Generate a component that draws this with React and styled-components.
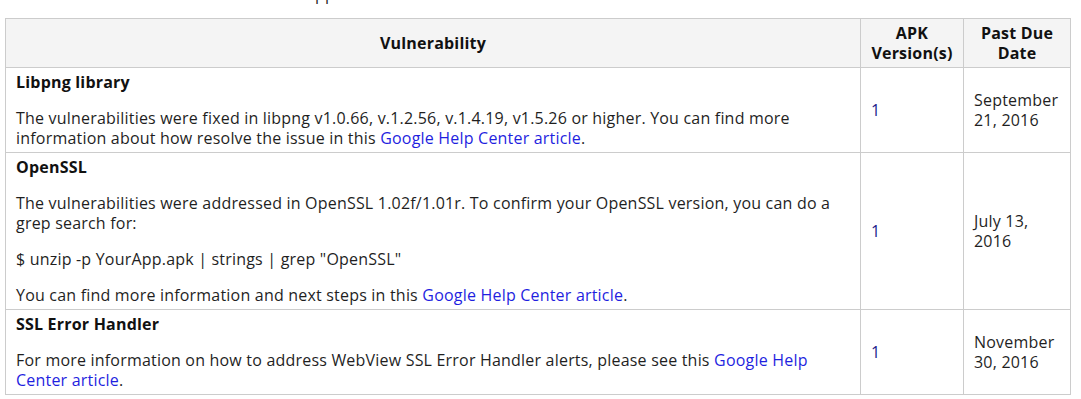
import React from "react";
import styled, { createGlobalStyle } from "styled-components";

const Global = createGlobalStyle`
  html, body { margin: 0; padding: 0; background: #fff; }
  body {
    font-family: "Open Sans", "Noto Sans", "Liberation Sans", sans-serif;
    font-size: 16px;
    line-height: 20px;
    letter-spacing: 0.2px;
    color: #1f1f1f;
  }
`;

const Page = styled.div`
  padding: 0 12px 0 5px;
`;

const Intro = styled.div`
  height: 18px;
  overflow: hidden;
`;

const IntroText = styled.p`
  margin: -16px 0 0 0;
  padding-left: 233px;
  line-height: 20px;
`;

const Table = styled.table`
  width: 1065px;
  border-collapse: collapse;
  table-layout: fixed;
`;

const Th = styled.th`
  background: #f4f4f4;
  border: 1px solid #cccccc;
  padding: 4px 10px;
  font-weight: 700;
  text-align: center;
  vertical-align: middle;
  color: #111;
`;

const Td = styled.td`
  border: 1px solid #cccccc;
  padding: 4px 10px;
  vertical-align: ${(p) => (p.$top ? "top" : "middle")};
  text-align: left;
`;

const Title = styled.div`
  font-weight: 700;
  color: #111;
`;

const Para = styled.p`
  margin: 16px 0 0 0;
`;

const Link = styled.a`
  color: #1f1fe0;
  text-decoration: none;
`;

const Num = styled.span`
  color: #1c1c8c;
`;

const rows = [
  {
    title: "Libpng library",
    body: (
      <Para>
        The vulnerabilities were fixed in libpng v1.0.66, v.1.2.56, v.1.4.19,
        v1.5.26 or higher. You can find more information about how resolve the
        issue in this <Link href="#">Google Help Center article</Link>.
      </Para>
    ),
    apk: "1",
    date: "September 21, 2016",
  },
  {
    title: "OpenSSL",
    body: (
      <>
        <Para>
          The vulnerabilities were addressed in OpenSSL 1.02f/1.01r. To confirm
          your OpenSSL version, you can do a grep search for:
        </Para>
        <Para>$ unzip -p YourApp.apk | strings | grep "OpenSSL"</Para>
        <Para>
          You can find more information and next steps in this{" "}
          <Link href="#">Google Help Center article</Link>.
        </Para>
      </>
    ),
    apk: "1",
    date: "July 13, 2016",
  },
  {
    title: "SSL Error Handler",
    body: (
      <Para>
        For more information on how to address WebView SSL Error Handler
        alerts, please see this <Link href="#">Google Help Center article</Link>.
      </Para>
    ),
    apk: "1",
    date: "November 30, 2016",
  },
];

export default function App() {
  return (
    <>
      <Global />
      <Page>
        <Intro>
          <IntroText>Affected apps</IntroText>
        </Intro>
        <Table>
          <colgroup>
            <col style={{ width: 855 }} />
            <col style={{ width: 103 }} />
            <col style={{ width: 107 }} />
          </colgroup>
          <thead>
            <tr>
              <Th>Vulnerability</Th>
              <Th>APK Version(s)</Th>
              <Th>Past Due Date</Th>
            </tr>
          </thead>
          <tbody>
            {rows.map((r) => (
              <tr key={r.title}>
                <Td $top>
                  <Title>{r.title}</Title>
                  {r.body}
                </Td>
                <Td>
                  <Num>{r.apk}</Num>
                </Td>
                <Td>{r.date}</Td>
              </tr>
            ))}
          </tbody>
        </Table>
      </Page>
    </>
  );
}
